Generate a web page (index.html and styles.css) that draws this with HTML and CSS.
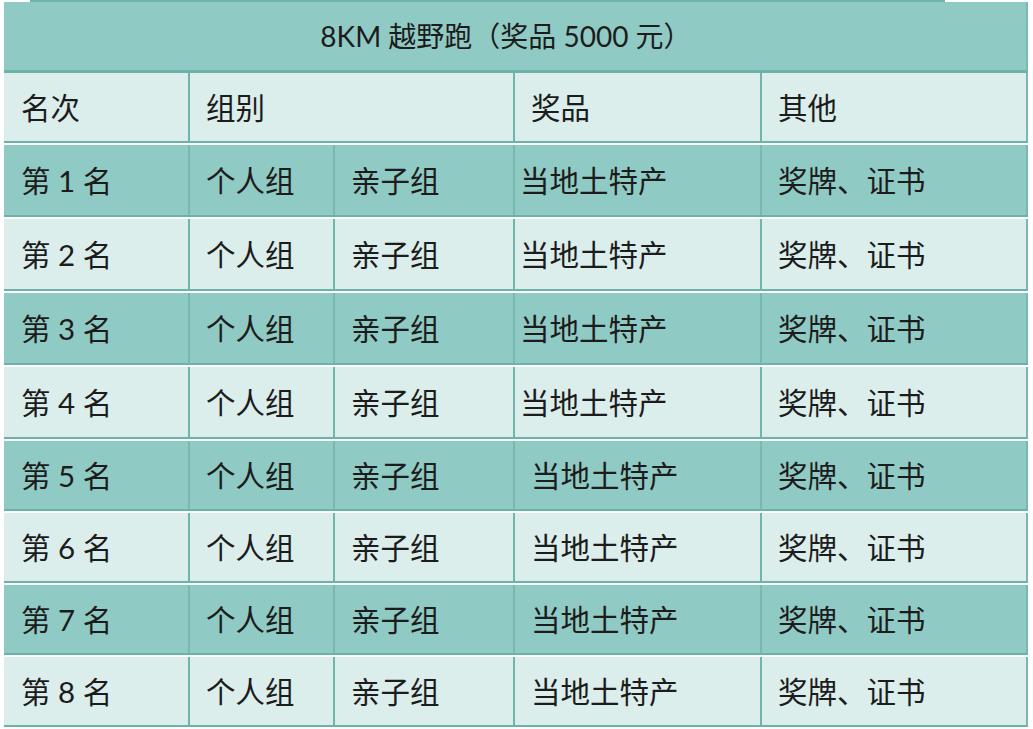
FILE: index.html
```html
<!DOCTYPE html>
<html lang="zh-CN">
<head>
<meta charset="utf-8">
<title>8KM 越野跑</title>
<link rel="stylesheet" href="styles.css">
</head>
<body>
<div class="sheet">
  <div class="topline"></div>
  <div class="title">8KM 越野跑（奖品 5000 元）</div>
  <div class="row head">
    <div class="cell c1">名次</div>
    <div class="cell c23">组别</div>
    <div class="cell c4">奖品</div>
    <div class="cell c5">其他</div>
  </div>
  <div class="row dark tall">
    <div class="cell c1">第 1 名</div><div class="cell c2">个人组</div><div class="cell c3">亲子组</div><div class="cell c4 near">当地土特产</div><div class="cell c5">奖牌、证书</div>
  </div>
  <div class="row light tall">
    <div class="cell c1">第 2 名</div><div class="cell c2">个人组</div><div class="cell c3">亲子组</div><div class="cell c4 near">当地土特产</div><div class="cell c5">奖牌、证书</div>
  </div>
  <div class="row dark tall">
    <div class="cell c1">第 3 名</div><div class="cell c2">个人组</div><div class="cell c3">亲子组</div><div class="cell c4 near">当地土特产</div><div class="cell c5">奖牌、证书</div>
  </div>
  <div class="row light tall">
    <div class="cell c1">第 4 名</div><div class="cell c2">个人组</div><div class="cell c3">亲子组</div><div class="cell c4 near">当地土特产</div><div class="cell c5">奖牌、证书</div>
  </div>
  <div class="row dark">
    <div class="cell c1">第 5 名</div><div class="cell c2">个人组</div><div class="cell c3">亲子组</div><div class="cell c4">当地土特产</div><div class="cell c5">奖牌、证书</div>
  </div>
  <div class="row light">
    <div class="cell c1">第 6 名</div><div class="cell c2">个人组</div><div class="cell c3">亲子组</div><div class="cell c4">当地土特产</div><div class="cell c5">奖牌、证书</div>
  </div>
  <div class="row dark">
    <div class="cell c1">第 7 名</div><div class="cell c2">个人组</div><div class="cell c3">亲子组</div><div class="cell c4">当地土特产</div><div class="cell c5">奖牌、证书</div>
  </div>
  <div class="row light">
    <div class="cell c1">第 8 名</div><div class="cell c2">个人组</div><div class="cell c3">亲子组</div><div class="cell c4">当地土特产</div><div class="cell c5">奖牌、证书</div>
  </div>
</div>
</body>
</html>
```
FILE: styles.css
```css
html, body {
  margin: 0;
  padding: 0;
  background: #ffffff;
}
body {
  font-family: Lato, "Noto Sans CJK SC", sans-serif;
  color: #1c1c1c;
}
.sheet {
  width: 1024px;
  margin-left: 4px;
}
.topline {
  height: 2px;
  margin-left: 26px;
  width: 915px;
  background: #6db4aa;
}
.title {
  height: 66px;
  padding-bottom: 2px;
  background: #90cac4;
  border-bottom: 3px solid #69b3a9;
  display: flex;
  align-items: center;
  justify-content: center;
  padding-right: 18px;
  font-size: 28px;
  border-right: 2px solid #7ab9b1;
}
.row {
  display: grid;
  grid-template-columns: 186px 145px 180px 247px 266px;
  height: 70px;
  border-bottom: 2px solid #6ab3a9;
  margin-bottom: 2px;
  font-size: 29.5px;
}
.row.head {
  grid-template-columns: 186px 325px 247px 266px;
  height: 68px;
  background: #dbeeec;
}
.row.tall { height: 70px; }
.row:not(.tall):not(.head) { height: 68px; }
.row.dark { background: #90cac4; }
.row.light { background: #dbeeec; }
.cell {
  display: flex;
  align-items: center;
  padding-left: 16px;
  padding-bottom: 3px;
  border-right: 2px solid #6fb5ab;
  white-space: nowrap;
}
.cell.c1 { padding-left: 17px; }
.row.dark .cell { border-right-color: #78b8b0; }
.cell.c4.near { padding-left: 5px; }
.cell.c5 { border-right: 2px solid #7ab9b1; }
```
